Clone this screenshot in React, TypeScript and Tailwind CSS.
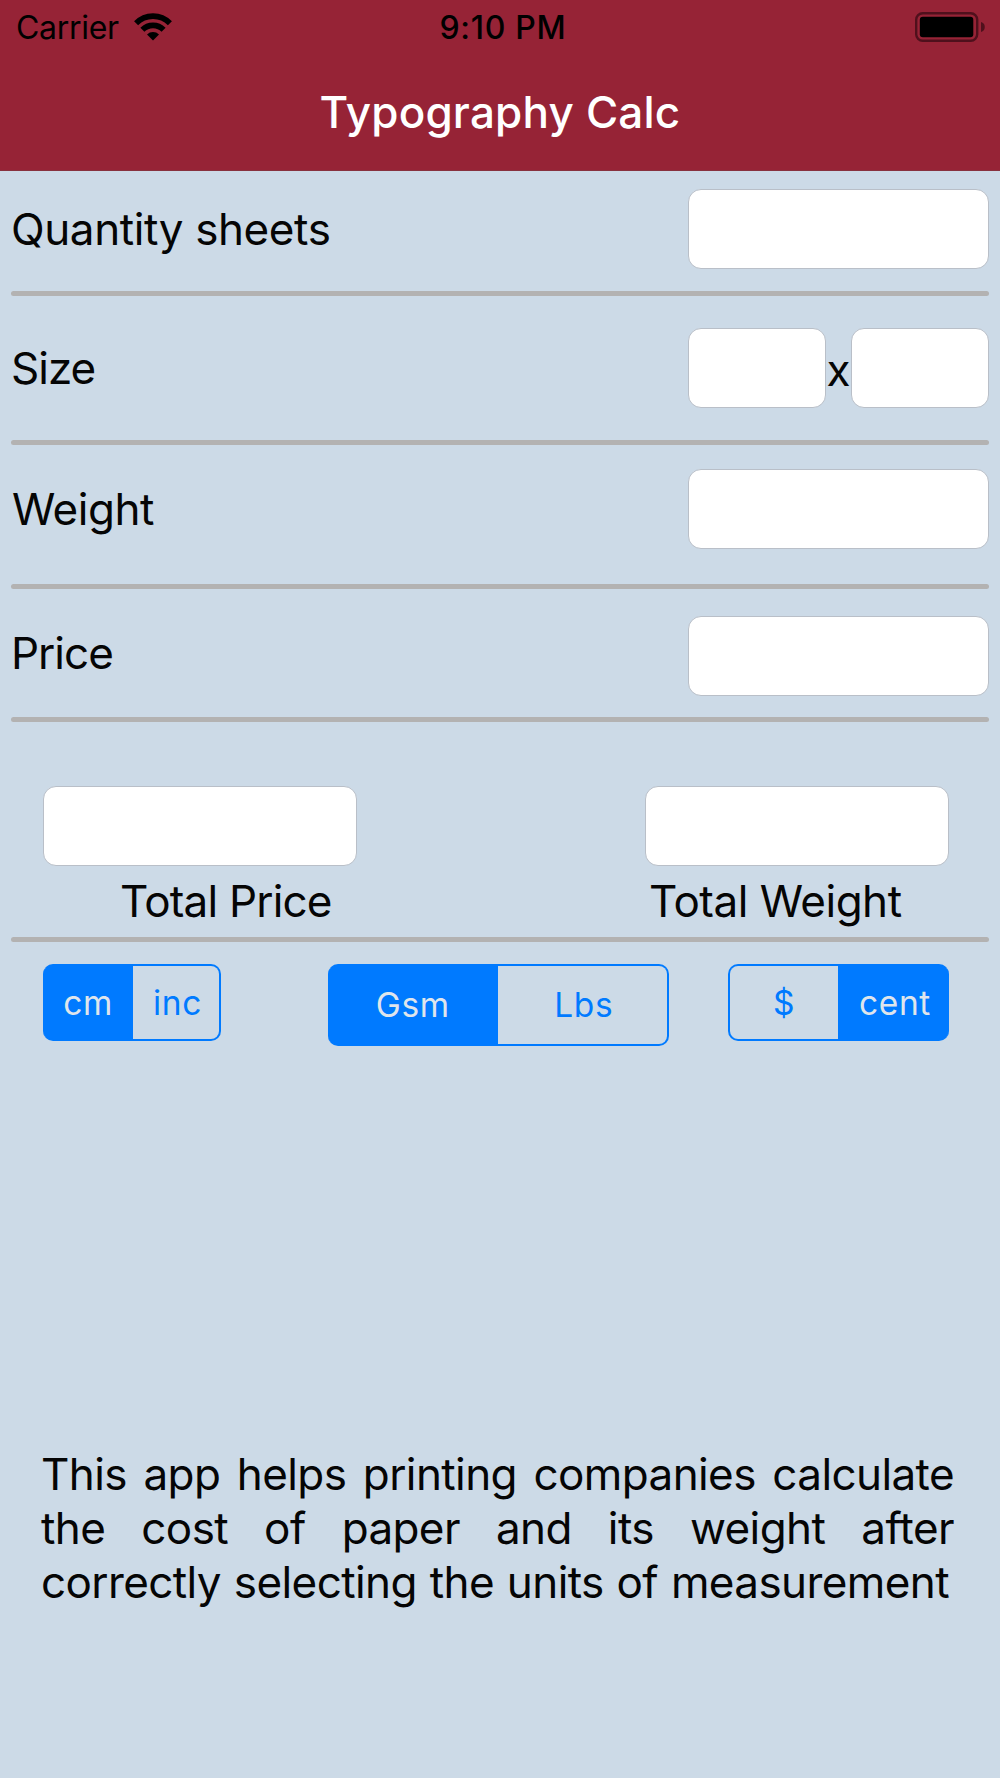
import React, { useState } from "react";

interface FieldProps {
  label: string;
  value: string;
  onChange: (value: string) => void;
  className?: string;
}

const Field = ({ label, value, onChange, className = "" }: FieldProps) => (
  <input
    type="text"
    aria-label={label}
    value={value}
    onChange={(e) => onChange(e.target.value)}
    className={`h-20 rounded-[13px] border border-[#b9bfc8] bg-white px-4 outline-none ${className}`}
  />
);

const Divider = () => (
  <div className="mx-[11px] h-[5px] shrink-0 rounded-full bg-[#b3b2b2]"></div>
);

interface SegmentedProps {
  options: string[];
  selected: string;
  onSelect: (option: string) => void;
  className: string;
}

const Segmented = ({
  options,
  selected,
  onSelect,
  className,
}: SegmentedProps) => (
  <div className={`grid text-[33.5px] tracking-[0.6px] ${className}`}>
    {options.map((option) => (
      <button
        key={option}
        type="button"
        onClick={() => onSelect(option)}
        className={`border-y-[2.5px] border-[#007aff] first:rounded-l-[10px] last:rounded-r-[10px] last:pl-[3px] ${
          option === selected
            ? "bg-[#007aff] text-[#dfe5ec]"
            : "text-[#007aff] first:border-l-[2.5px] last:border-r-[2.5px]"
        }`}
      >
        {option}
      </button>
    ))}
  </div>
);

const StatusBar = () => (
  <div className="flex h-[54px] items-center justify-between pr-[15px] pl-[16px] text-[32px] text-black">
    <div className="flex flex-1 items-center">
      <span className="pt-[2px] tracking-[-0.3px]">Carrier</span>
      <svg width="38" height="28" viewBox="0 0 38 28" className="ml-[15px]">
        <path
          d="M2.1 10.3 A23.4 23.4 0 0 1 35.9 10.3"
          fill="none"
          stroke="black"
          strokeWidth="5.6"
        />
        <path
          d="M8.4 16.8 A14.8 14.8 0 0 1 29.6 16.8"
          fill="none"
          stroke="black"
          strokeWidth="5.6"
        />
        <path d="M13 21.4 A9 9 0 0 1 25 21.4 L19 27.4 Z" fill="black" />
      </svg>
    </div>
    <span className="pt-[2px] pl-[5px] font-medium tracking-[0.7px]">
      9:10 PM
    </span>
    <div className="flex flex-1 justify-end">
      <svg width="70" height="30" viewBox="0 0 70 30">
        <rect
          x="1.2"
          y="1.2"
          width="61"
          height="27.6"
          rx="6.5"
          fill="none"
          stroke="#4f101c"
          strokeWidth="2.4"
        />
        <rect x="4.8" y="4.8" width="53.5" height="20.5" rx="3" fill="black" />
        <path d="M66 10 A5.2 5.2 0 0 1 66 20 Z" fill="#4f101c" />
      </svg>
    </div>
  </div>
);

const App = () => {
  const [quantity, setQuantity] = useState("");
  const [width, setWidth] = useState("");
  const [height, setHeight] = useState("");
  const [weight, setWeight] = useState("");
  const [price, setPrice] = useState("");
  const [totalPrice, setTotalPrice] = useState("");
  const [totalWeight, setTotalWeight] = useState("");
  const [sizeUnit, setSizeUnit] = useState("cm");
  const [weightUnit, setWeightUnit] = useState("Gsm");
  const [currency, setCurrency] = useState("cent");

  return (
    <div className="flex h-[1778px] w-[1000px] flex-col overflow-hidden bg-[#ccdae7] font-['Inter',sans-serif] text-[44px] leading-[54px] text-[#050505]">
      <header className="h-[171px] shrink-0 border-b border-[#87313f] bg-[#962336]">
        <StatusBar />
        <h1 className="mt-[31px] text-center text-[44px] font-medium tracking-[0.2px] text-white">
          Typography Calc
        </h1>
      </header>

      <div className="flex h-[120px] shrink-0 items-center justify-between pt-[18px] pr-[11px] pb-[22px] pl-[11px]">
        <span className="tracking-[-0.4px]">Quantity sheets</span>
        <Field
          label="Quantity sheets"
          value={quantity}
          onChange={setQuantity}
          className="w-[301px]"
        />
      </div>
      <Divider />

      <div className="flex h-[144px] shrink-0 items-center justify-between px-[11px]">
        <span className="tracking-[-1px]">Size</span>
        <div className="flex w-[301px] items-center justify-between">
          <Field
            label="Width"
            value={width}
            onChange={setWidth}
            className="w-[138px]"
          />
          <span className="pt-[4px]">x</span>
          <Field
            label="Height"
            value={height}
            onChange={setHeight}
            className="w-[138px]"
          />
        </div>
      </div>
      <Divider />

      <div className="flex h-[139px] shrink-0 items-center justify-between px-[11px] pb-[11px]">
        <span className="pl-px tracking-[-0.5px]">Weight</span>
        <Field
          label="Weight"
          value={weight}
          onChange={setWeight}
          className="w-[301px]"
        />
      </div>
      <Divider />

      <div className="flex h-[128px] shrink-0 items-center justify-between px-[11px] pt-[6px]">
        <span className="pb-[7px] tracking-[-1px]">Price</span>
        <Field
          label="Price"
          value={price}
          onChange={setPrice}
          className="w-[301px]"
        />
      </div>
      <Divider />

      <div className="flex h-[215px] shrink-0 justify-between pt-[64px] pr-[51px] pl-[43px]">
        <div className="flex flex-col">
          <Field
            label="Total Price"
            value={totalPrice}
            onChange={setTotalPrice}
            className="w-[314px]"
          />
          <span className="mt-[8px] pl-[77px] tracking-[-0.8px]">
            Total Price
          </span>
        </div>
        <div className="flex flex-col">
          <Field
            label="Total Weight"
            value={totalWeight}
            onChange={setTotalWeight}
            className="w-[304px]"
          />
          <span className="mt-[8px] pl-[4px] tracking-[-0.5px]">
            Total Weight
          </span>
        </div>
      </div>
      <Divider />

      <div className="flex shrink-0 items-start justify-between pt-[22px] pr-[51px] pl-[43px]">
        <Segmented
          options={["cm", "inc"]}
          selected={sizeUnit}
          onSelect={setSizeUnit}
          className="h-[77px] w-[178px] grid-cols-[90px_88px]"
        />
        <Segmented
          options={["Gsm", "Lbs"]}
          selected={weightUnit}
          onSelect={setWeightUnit}
          className="ml-[47px] h-[82px] w-[341px] grid-cols-2"
        />
        <Segmented
          options={["$", "cent"]}
          selected={currency}
          onSelect={setCurrency}
          className="h-[77px] w-[221px] grid-cols-[110px_111px]"
        />
      </div>

      <p className="mt-auto mr-[46px] mb-[169px] ml-[41px] text-justify tracking-[-0.6px] [word-spacing:1.1px]">
        This app helps printing companies calculate the cost of paper and its
        weight after correctly selecting the units of measurement
      </p>
    </div>
  );
};

export default App;
